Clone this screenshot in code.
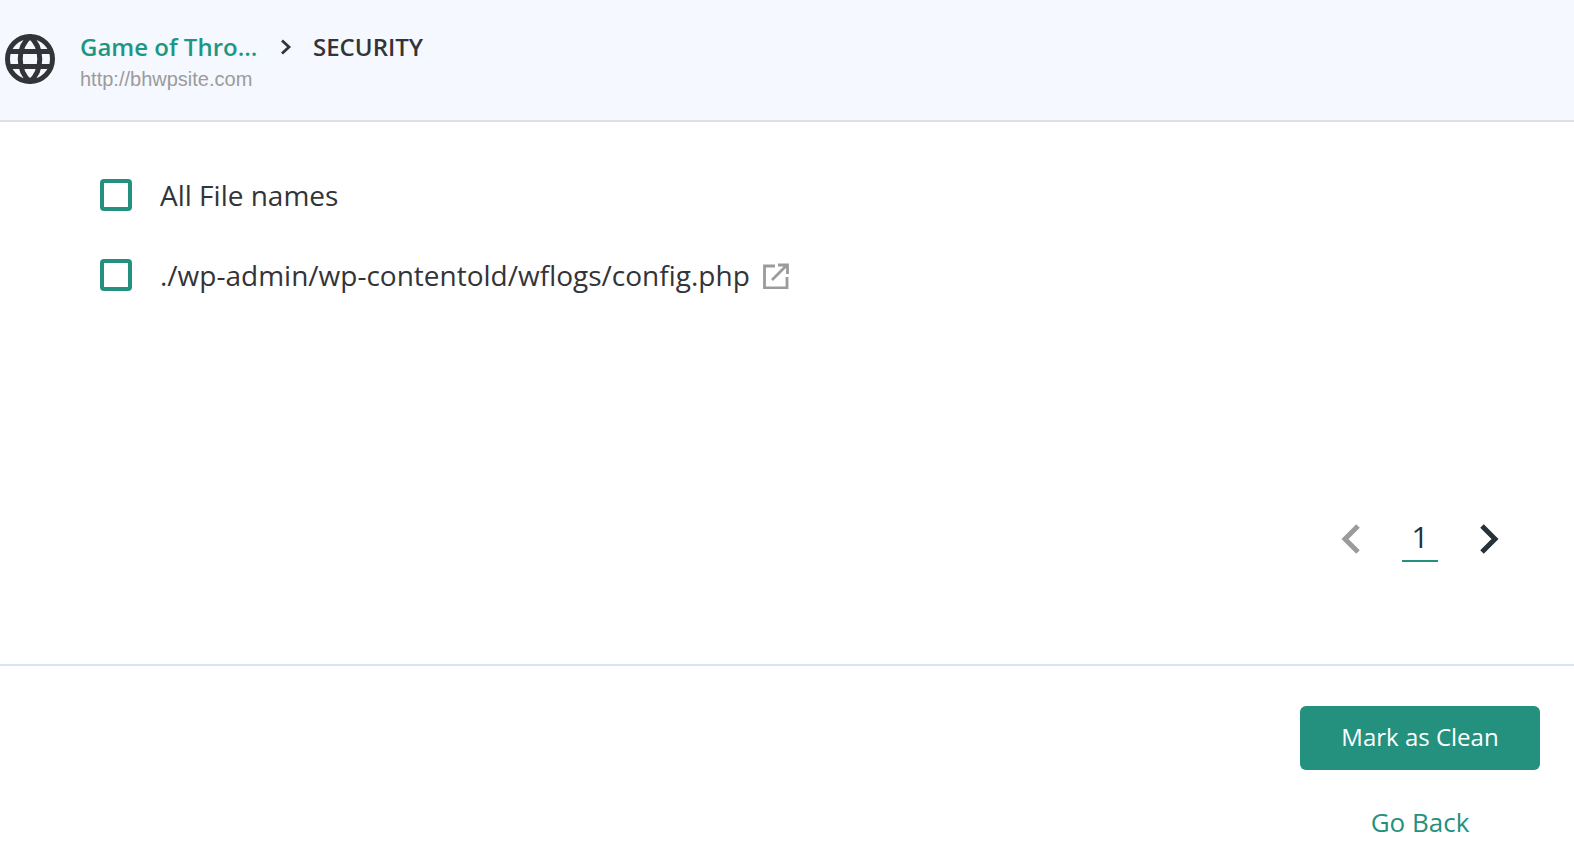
<script>
</script>

<div class="page">
  <header class="top">
    <svg class="globe" width="50" height="50" viewBox="0 0 50 50" fill="none" stroke="#333438" stroke-width="5">
      <circle cx="25" cy="25" r="22.5" />
      <path d="M25 2.5C12 13 12 37 25 47.5C38 37 38 13 25 2.5Z" />
      <path d="M4 17.5H46M4 32.5H46" />
    </svg>
    <div class="crumbs">
      <div class="line">
        <span class="site">Game of Thro...</span>
        <svg class="sep" width="14" height="18" viewBox="0 0 14 18" fill="none" stroke="#333438" stroke-width="2.8">
          <path d="M3 2.5L10 9L3 15.5" />
        </svg>
        <span class="section">SECURITY</span>
      </div>
      <div class="url">http://bhwpsite.com</div>
    </div>
  </header>

  <main class="files">
    <label class="row">
      <span class="box"></span>
      <span class="name">All File names</span>
    </label>
    <label class="row">
      <span class="box"></span>
      <span class="name">./wp-admin/wp-contentold/wflogs/config.php</span>
      <svg class="ext" width="28" height="28" viewBox="0 0 28 28" fill="none" stroke="#9b9b9b" stroke-width="2.8">
        <path d="M13 5H2.5V27H25V16M10 19L24.5 4.5M16 4H25.5V13" />
      </svg>
    </label>
  </main>

  <nav class="pager">
    <svg class="chev" width="22" height="32" viewBox="0 0 22 32" fill="none" stroke="#9b9b9b" stroke-width="5">
      <path d="M18 3L5 16L18 29" />
    </svg>
    <span class="num">1</span>
    <svg class="chev" width="22" height="32" viewBox="0 0 22 32" fill="none" stroke="#263238" stroke-width="5">
      <path d="M4 3L17 16L4 29" />
    </svg>
  </nav>

  <footer class="actions">
    <button class="clean">Mark as Clean</button>
    <a class="back" href="#back">Go Back</a>
  </footer>
</div>

<style>
  :global(body) {
    margin: 0;
    background: #fff;
    font-family: "Open Sans", "Noto Sans", sans-serif;
    color: #333438;
  }
  .page {
    height: 842px;
    overflow: hidden;
    display: flex;
    flex-direction: column;
  }
  .top {
    box-sizing: border-box;
    background: #f5f8ff;
    border-bottom: 2px solid #dcdfe3;
    height: 122px;
    display: flex;
    align-items: center;
    padding: 0 0 2px 5px;
    gap: 25px;
  }
  .globe { flex: none; }
  .crumbs { display: flex; flex-direction: column; margin-top: 8px; }
  .line {
    display: flex;
    align-items: center;
    height: 32px;
    font-size: 24px;
    font-weight: 600;
    line-height: 32px;
  }
  .site { color: #1f967f; width: 199px; }
  .sep { margin-right: 20px; }
  .section { color: #333438; }
  .url {
    font-family: "Liberation Sans", Arial, sans-serif;
    font-size: 20px;
    line-height: 32px;
    color: #9b9b9b;
  }
  .files {
    padding: 56px 0 0 100px;
    height: 272px;
    box-sizing: border-box;
    display: flex;
    flex-direction: column;
    gap: 46px;
  }
  .row {
    display: flex;
    align-items: center;
    height: 34px;
    font-size: 28px;
  }
  .box {
    width: 32px;
    height: 32px;
    box-sizing: border-box;
    border: 4px solid #23917e;
    border-radius: 4px;
    margin-right: 28px;
    flex: none;
  }
  .ext { margin-left: 12px; }
  .pager {
    display: flex;
    justify-content: flex-end;
    align-items: center;
    height: 47px;
    padding-right: 74px;
    margin-top: 121px;
    gap: 40px;
  }
  .num {
    width: 36px;
    height: 47px;
    line-height: 44px;
    text-align: center;
    font-size: 30px;
    font-weight: 400;
    color: #263238;
    border-bottom: 2px solid #23917e;
    box-sizing: border-box;
  }
  .actions {
    margin-top: 102px;
    border-top: 2px solid #d6e4f7;
    display: flex;
    flex-direction: column;
    align-self: stretch;
    padding: 40px 34px 0 0;
    align-items: flex-end;
  }
  .clean {
    width: 240px;
    height: 64px;
    border: none;
    border-radius: 6px;
    background: #24917e;
    color: #fff;
    padding-bottom: 4px;
    font: 400 24px "Open Sans", sans-serif;
  }
  .back {
    width: 240px;
    text-align: center;
    margin-top: 32px;
    font-size: 26px;
    line-height: 40px;
    color: #24917e;
    text-decoration: none;
  }
</style>
